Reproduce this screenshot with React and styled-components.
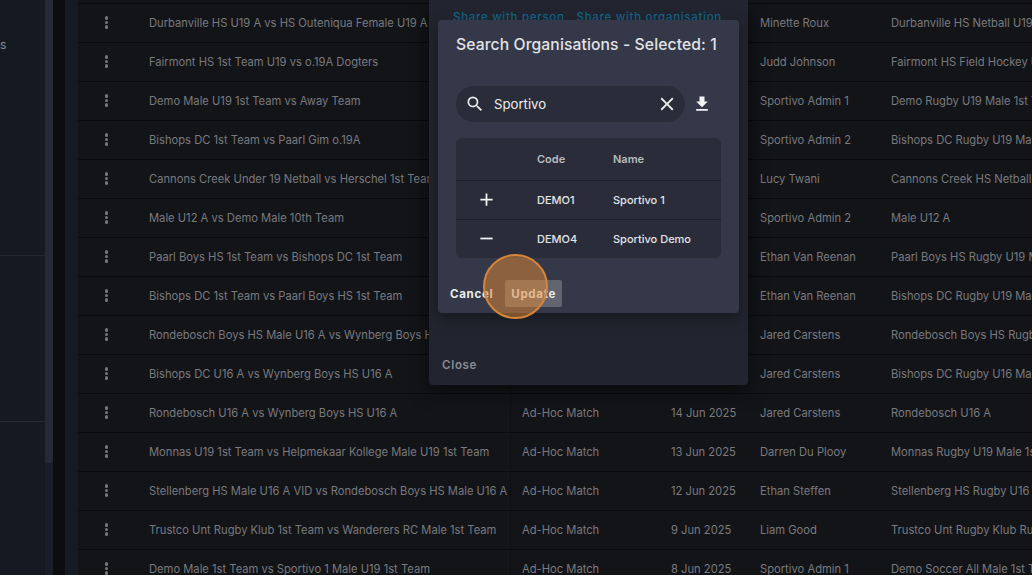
import React from 'react';
import styled, { createGlobalStyle } from 'styled-components';
import { MdSearch, MdClose, MdFileDownload, MdAdd, MdRemove } from 'react-icons/md';

const GlobalStyle = createGlobalStyle`
  html, body {
    margin: 0;
    height: 100%;
    overflow: hidden;
    background: #0c0d10;
    font-family: "Inter", "Noto Sans", sans-serif;
  }
  * { box-sizing: border-box; }
`;

const rows = [
  { name: 'Durbanville HS U19 A vs HS Outeniqua Female U19 A', person: 'Minette Roux', team: 'Durbanville HS Netball U19' },
  { name: 'Fairmont HS 1st Team U19 vs o.19A Dogters', person: 'Judd Johnson', team: 'Fairmont HS Field Hockey U19' },
  { name: 'Demo Male U19 1st Team vs Away Team', person: 'Sportivo Admin 1', team: 'Demo Rugby U19 Male 1st Team' },
  { name: 'Bishops DC 1st Team vs Paarl Gim o.19A', person: 'Sportivo Admin 2', team: 'Bishops DC Rugby U19 Male' },
  { name: 'Cannons Creek Under 19 Netball vs Herschel 1st Team', person: 'Lucy Twani', team: 'Cannons Creek HS Netball U19' },
  { name: 'Male U12 A vs Demo Male 10th Team', person: 'Sportivo Admin 2', team: 'Male U12 A' },
  { name: 'Paarl Boys HS 1st Team vs Bishops DC 1st Team', person: 'Ethan Van Reenan', team: 'Paarl Boys HS Rugby U19 Male' },
  { name: 'Bishops DC 1st Team vs Paarl Boys HS 1st Team', person: 'Ethan Van Reenan', team: 'Bishops DC Rugby U19 Male' },
  { name: 'Rondebosch Boys HS Male U16 A vs Wynberg Boys HS U16 A', person: 'Jared Carstens', team: 'Rondebosch Boys HS Rugby U16' },
  { name: 'Bishops DC U16 A vs Wynberg Boys HS U16 A', person: 'Jared Carstens', team: 'Bishops DC Rugby U16 Male' },
  { name: 'Rondebosch U16 A vs Wynberg Boys HS U16 A', type: 'Ad-Hoc Match', date: '14 Jun 2025', person: 'Jared Carstens', team: 'Rondebosch U16 A' },
  { name: 'Monnas U19 1st Team vs Helpmekaar Kollege Male U19 1st Team', type: 'Ad-Hoc Match', date: '13 Jun 2025', person: 'Darren Du Plooy', team: 'Monnas Rugby U19 Male 1st Team' },
  { name: 'Stellenberg HS Male U16 A VID vs Rondebosch Boys HS Male U16 A', type: 'Ad-Hoc Match', date: '12 Jun 2025', person: 'Ethan Steffen', team: 'Stellenberg HS Rugby U16 Male' },
  { name: 'Trustco Unt Rugby Klub 1st Team vs Wanderers RC Male 1st Team', type: 'Ad-Hoc Match', date: '9 Jun 2025', person: 'Liam Good', team: 'Trustco Unt Rugby Klub Rugby' },
  { name: 'Demo Male 1st Team vs Sportivo 1 Male U19 1st Team', type: 'Ad-Hoc Match', date: '8 Jun 2025', person: 'Sportivo Admin 1', team: 'Demo Soccer All Male 1st Team' },
];

const Page = styled.div`
  display: flex;
  width: 1032px;
  height: 575px;
  overflow: hidden;
  background: #0c0d10;
`;

const Sidebar = styled.aside`
  display: flex;
  width: 53px;
  height: 575px;
  background: #151922;
`;

const SidebarBody = styled.div`
  flex: 1;
  display: flex;
  flex-direction: column;
  padding-top: 37px;
  color: #8b8d93;
  font-size: 12px;
  line-height: 16px;
`;

const SidebarItem = styled.div`
  height: 218px;
`;

const SidebarSection = styled.div`
  height: 166px;
  border-top: 1px solid #252932;
`;

const SidebarEnd = styled.div`
  border-top: 1px solid #252932;
`;

const ScrollTrack = styled.div`
  width: 8px;
  height: 575px;
  background: #1a1e28;
`;

const ScrollThumb = styled.div`
  height: 463px;
  background: #262a35;
  border-radius: 0 0 3px 3px;
`;

const Gutter = styled.div`
  width: 12px;
  height: 575px;
  background: #0c0d10;
`;

const TableEdge = styled.div`
  width: 13px;
  height: 575px;
  background: #151a23;
`;

const Table = styled.div`
  flex: 1;
  min-width: 0;
  padding-top: 3px;
  background: #131418;
`;

const Row = styled.div`
  display: grid;
  grid-template-columns: 71px 361px 161px 89px 131px 1fr;
  align-items: stretch;
  height: 39px;
  border-top: 1px solid #0a0b0d;
  color: #797a7f;
  font-size: 11.2px;
`;

const Cell = styled.div`
  display: flex;
  align-items: center;
  min-width: 0;
  padding-bottom: 1px;
  white-space: nowrap;
  overflow: hidden;
`;

const TypeCell = styled(Cell)`
  padding-left: 11px;
  border-left: 1px solid #0e0f12;
`;

const DotsCell = styled(Cell)`
  justify-content: center;
  padding-right: 14px;
`;

const Dots = styled.span`
  display: flex;
  flex-direction: column;
  gap: 1.2px;
`;

const Dot = styled.span`
  width: 3.5px;
  height: 3.5px;
  border-radius: 50%;
  background: #75777c;
`;

const OuterDialog = styled.div`
  position: absolute;
  left: 429px;
  top: 0;
  width: 319px;
  height: 385px;
  display: flex;
  flex-direction: column;
  justify-content: space-between;
  background: #22252f;
  border-radius: 0 0 4px 4px;
  box-shadow: 0 8px 20px rgba(0, 0, 0, 0.45);
`;

const ShareTabs = styled.div`
  display: flex;
  gap: 12px;
  padding: 10px 0 0 24px;
  color: #14638a;
  font-size: 11.5px;
  font-weight: 500;
  letter-spacing: 0.7px;
  line-height: 14px;
`;

const CloseButton = styled.button`
  align-self: flex-start;
  margin: 0 0 13px 13px;
  padding: 0;
  border: 0;
  background: none;
  color: #8a8c93;
  font: 600 11.5px "Inter", sans-serif;
  letter-spacing: 0.7px;
  line-height: 14px;
`;

const InnerDialog = styled.div`
  position: absolute;
  left: 438px;
  top: 20px;
  width: 301px;
  height: 293px;
  display: flex;
  flex-direction: column;
  padding: 15px 18px 0;
  background: #343848;
  border-radius: 4px;
  box-shadow: 0 6px 16px rgba(0, 0, 0, 0.35);
`;

const DialogTitle = styled.h2`
  margin: 0 0 31px;
  color: #e2e3e6;
  font-size: 15.7px;
  font-weight: 500;
  letter-spacing: 0.1px;
  line-height: 20px;
  white-space: nowrap;
`;

const SearchRow = styled.div`
  display: flex;
  align-items: center;
  height: 36px;
  margin-bottom: 16px;
`;

const SearchBox = styled.div`
  display: flex;
  align-items: center;
  width: 229px;
  height: 36px;
  padding: 0 7px 0 9px;
  background: #2a2d39;
  border-radius: 18px;
  color: #eceded;
  font-size: 13.2px;
`;

const SearchText = styled.span`
  flex: 1;
  padding-left: 9px;
`;

const ExportButton = styled.span`
  display: flex;
  margin-left: 7px;
  color: #f2f2f3;
`;

const OrgTable = styled.div`
  width: 265px;
  background: #2a2d39;
  border-radius: 6px;
  font-size: 11px;
  color: #e4e5e8;
`;

const OrgRow = styled.div`
  display: grid;
  grid-template-columns: 81px 76px 1fr;
  align-items: center;
  height: ${p => p.$h}px;
  padding-bottom: 1px;
  border-top: ${p => (p.$first ? '0' : '1px solid #1f222b')};
  font-weight: ${p => (p.$first ? 600 : 500)};
  color: ${p => (p.$first ? '#b9bbc0' : '#e4e5e8')};
`;

const OrgToggle = styled.span`
  display: flex;
  justify-content: center;
  padding-right: 20px;
  color: #f4f4f5;
`;

const DialogActions = styled.div`
  display: flex;
  align-items: center;
  gap: 12px;
  margin: 22px 0 0 -6px;
`;

const TextButton = styled.button`
  padding: 0;
  border: 0;
  background: none;
  color: #eceded;
  font: 700 11.5px "Inter", sans-serif;
  letter-spacing: 0.7px;
`;

const UpdateButton = styled.button`
  height: 27px;
  padding: 0 6px;
  border: 0;
  border-radius: 2px;
  background: #62646f;
  color: #e9e9ea;
  font: 700 11.5px "Inter", sans-serif;
  letter-spacing: 0.7px;
`;

const ClickMarker = styled.div`
  position: absolute;
  left: 482.5px;
  top: 254px;
  width: 65px;
  height: 65px;
  border-radius: 50%;
  background: rgba(226, 137, 54, 0.5);
  border: 2px solid #d5853c;
`;

function Organisations() {
  return (
    <OrgTable>
      <OrgRow $first $h={42}>
        <span />
        <span>Code</span>
        <span>Name</span>
      </OrgRow>
      <OrgRow $h={39}>
        <OrgToggle><MdAdd size={21} /></OrgToggle>
        <span>DEMO1</span>
        <span>Sportivo 1</span>
      </OrgRow>
      <OrgRow $h={39}>
        <OrgToggle><MdRemove size={21} /></OrgToggle>
        <span>DEMO4</span>
        <span>Sportivo Demo</span>
      </OrgRow>
    </OrgTable>
  );
}

export default function App() {
  return (
    <Page>
      <GlobalStyle />
      <Sidebar>
        <SidebarBody>
          <SidebarItem>s</SidebarItem>
          <SidebarSection />
          <SidebarEnd />
        </SidebarBody>
        <ScrollTrack>
          <ScrollThumb />
        </ScrollTrack>
      </Sidebar>
      <Gutter />
      <TableEdge />
      <Table>
        {rows.map(row => (
          <Row key={row.name}>
            <DotsCell>
              <Dots><Dot /><Dot /><Dot /></Dots>
            </DotsCell>
            <Cell>{row.name}</Cell>
            <TypeCell>{row.type}</TypeCell>
            <Cell>{row.date}</Cell>
            <Cell>{row.person}</Cell>
            <Cell>{row.team}</Cell>
          </Row>
        ))}
      </Table>

      <OuterDialog>
        <ShareTabs>
          <span>Share with person</span>
          <span>Share with organisation</span>
        </ShareTabs>
        <CloseButton>Close</CloseButton>
      </OuterDialog>

      <InnerDialog>
        <DialogTitle>Search Organisations - Selected: 1</DialogTitle>
        <SearchRow>
          <SearchBox>
            <MdSearch size={20} />
            <SearchText>Sportivo</SearchText>
            <MdClose size={22} />
          </SearchBox>
          <ExportButton><MdFileDownload size={20} /></ExportButton>
        </SearchRow>
        <Organisations />
        <DialogActions>
          <TextButton>Cancel</TextButton>
          <UpdateButton>Update</UpdateButton>
        </DialogActions>
      </InnerDialog>

      <ClickMarker />
    </Page>
  );
}
